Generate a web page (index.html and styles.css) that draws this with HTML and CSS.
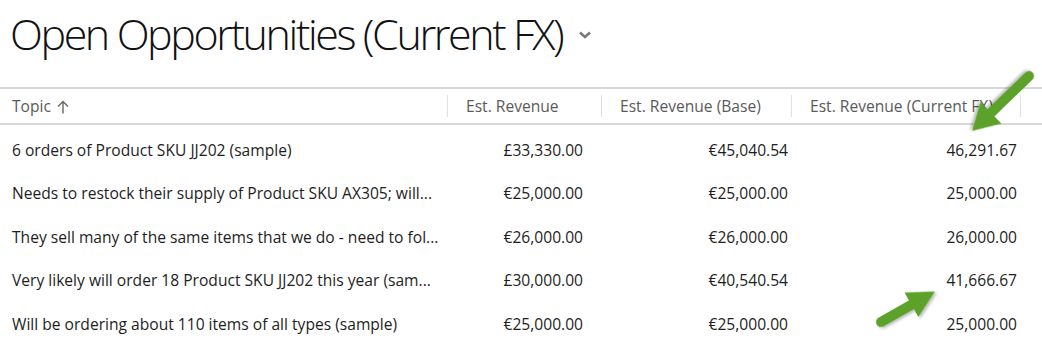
FILE: index.html
```html
<!DOCTYPE html>
<html>
<head>
<meta charset="utf-8">
<link rel="stylesheet" href="styles.css">
</head>
<body>
<div class="page">
  <div class="title-bar">
    <h1 class="title">Open Opportunities (Current FX)</h1>
    <svg class="chevron" width="14" height="10" viewBox="0 0 14 10"><polyline points="2,2.5 7,7 12,2.5" fill="none" stroke="#7a7a7a" stroke-width="2.6"/></svg>
  </div>
  <div class="grid">
    <div class="head">
      <div class="hcell topic">Topic <svg class="sort" width="12" height="14" viewBox="0 0 12 14"><path d="M6 1.5V13.5M1 6.5L6 1.5L11 6.5" fill="none" stroke="#666" stroke-width="1.4"/></svg></div>
      <div class="hcell sep">Est. Revenue</div>
      <div class="hcell sep">Est. Revenue (Base)</div>
      <div class="hcell sep">Est. Revenue (Current FX)</div>
      <div class="hcell sep last"></div>
    </div>
    <div class="body">
      <div class="row">
        <div class="cell topic">6 orders of Product SKU JJ202 (sample)</div>
        <div class="cell num c2">£33,330.00</div>
        <div class="cell num c3">€45,040.54</div>
        <div class="cell num c4">46,291.67</div>
        <div class="cell"></div>
      </div>
      <div class="row">
        <div class="cell topic">Needs to restock their supply of Product SKU AX305; will...</div>
        <div class="cell num c2">€25,000.00</div>
        <div class="cell num c3">€25,000.00</div>
        <div class="cell num c4">25,000.00</div>
        <div class="cell"></div>
      </div>
      <div class="row">
        <div class="cell topic">They sell many of the same items that we do - need to fol...</div>
        <div class="cell num c2">€26,000.00</div>
        <div class="cell num c3">€26,000.00</div>
        <div class="cell num c4">26,000.00</div>
        <div class="cell"></div>
      </div>
      <div class="row">
        <div class="cell topic">Very likely will order 18 Product SKU JJ202 this year (sam...</div>
        <div class="cell num c2">£30,000.00</div>
        <div class="cell num c3">€40,540.54</div>
        <div class="cell num c4">41,666.67</div>
        <div class="cell"></div>
      </div>
      <div class="row">
        <div class="cell topic">Will be ordering about 110 items of all types (sample)</div>
        <div class="cell num c2">€25,000.00</div>
        <div class="cell num c3">€25,000.00</div>
        <div class="cell num c4">25,000.00</div>
        <div class="cell"></div>
      </div>
    </div>
  </div>
  <svg class="arrows" width="1042" height="346" viewBox="0 0 1042 346">
    <defs>
      <filter id="sh" x="-30%" y="-30%" width="160%" height="160%">
        <feDropShadow dx="1" dy="2" stdDeviation="1.5" flood-color="#000" flood-opacity="0.3"/>
      </filter>
    </defs>
    <g filter="url(#sh)" transform="translate(1029 76) rotate(136)">
      <line x1="0" y1="0" x2="56" y2="0" stroke="#5ba22c" stroke-width="10" stroke-linecap="round"/>
      <polygon points="79,0 53,-15 53,15" fill="#5ba22c"/>
    </g>
    <g filter="url(#sh)" transform="translate(881 322) rotate(-29.5)">
      <line x1="0" y1="0" x2="38" y2="0" stroke="#5ba22c" stroke-width="10" stroke-linecap="round"/>
      <polygon points="62,0 35,-14 35,14" fill="#5ba22c"/>
    </g>
  </svg>
</div>
</body>
</html>
```
FILE: styles.css
```css
html, body {
  margin: 0;
  padding: 0;
  background: #ffffff;
}

.page {
  position: relative;
  width: 1042px;
  height: 346px;
  overflow: hidden;
  font-family: "Open Sans", "Noto Sans", "Liberation Sans", sans-serif;
  color: #1e1e1e;
}

.title-bar {
  display: flex;
  align-items: flex-start;
  height: 87px;
  padding: 6px 0 0 10px;
  box-sizing: border-box;
}

.title {
  margin: 0;
  font-size: 43px;
  font-weight: 300;
  line-height: 56px;
  letter-spacing: -2.4px;
  color: #111;
}

.chevron {
  margin: 24px 0 0 16px;
}

.grid {
  font-size: 15.6px;
}

.head {
  display: grid;
  grid-template-columns: 447px 154px 190px 229px 1fr;
  height: 34px;
  border-top: 2px solid #d8d8d8;
  border-bottom: 2px solid #d8d8d8;
  align-items: center;
  color: #5a5a5a;
}

.hcell {
  display: flex;
  align-items: center;
  height: 22px;
  padding-left: 18px;
  white-space: nowrap;
}

.hcell.topic {
  padding-left: 12px;
  gap: 6px;
}

.hcell.sep {
  border-left: 1px solid #e2e2e2;
}

.sort {
  margin-top: 1px;
}

.body {
  padding-top: 3px;
}

.row {
  display: grid;
  grid-template-columns: 447px 154px 190px 229px 1fr;
  height: 43.5px;
  align-items: center;
}

.cell {
  white-space: nowrap;
}

.cell.topic {
  padding-left: 12px;
}

.cell.num {
  text-align: right;
}

.cell.c2 {
  padding-right: 18px;
}

.cell.c3 {
  padding-right: 3px;
}

.cell.c4 {
  padding-right: 3px;
}

.arrows {
  position: absolute;
  left: 0;
  top: 0;
  pointer-events: none;
}
```
